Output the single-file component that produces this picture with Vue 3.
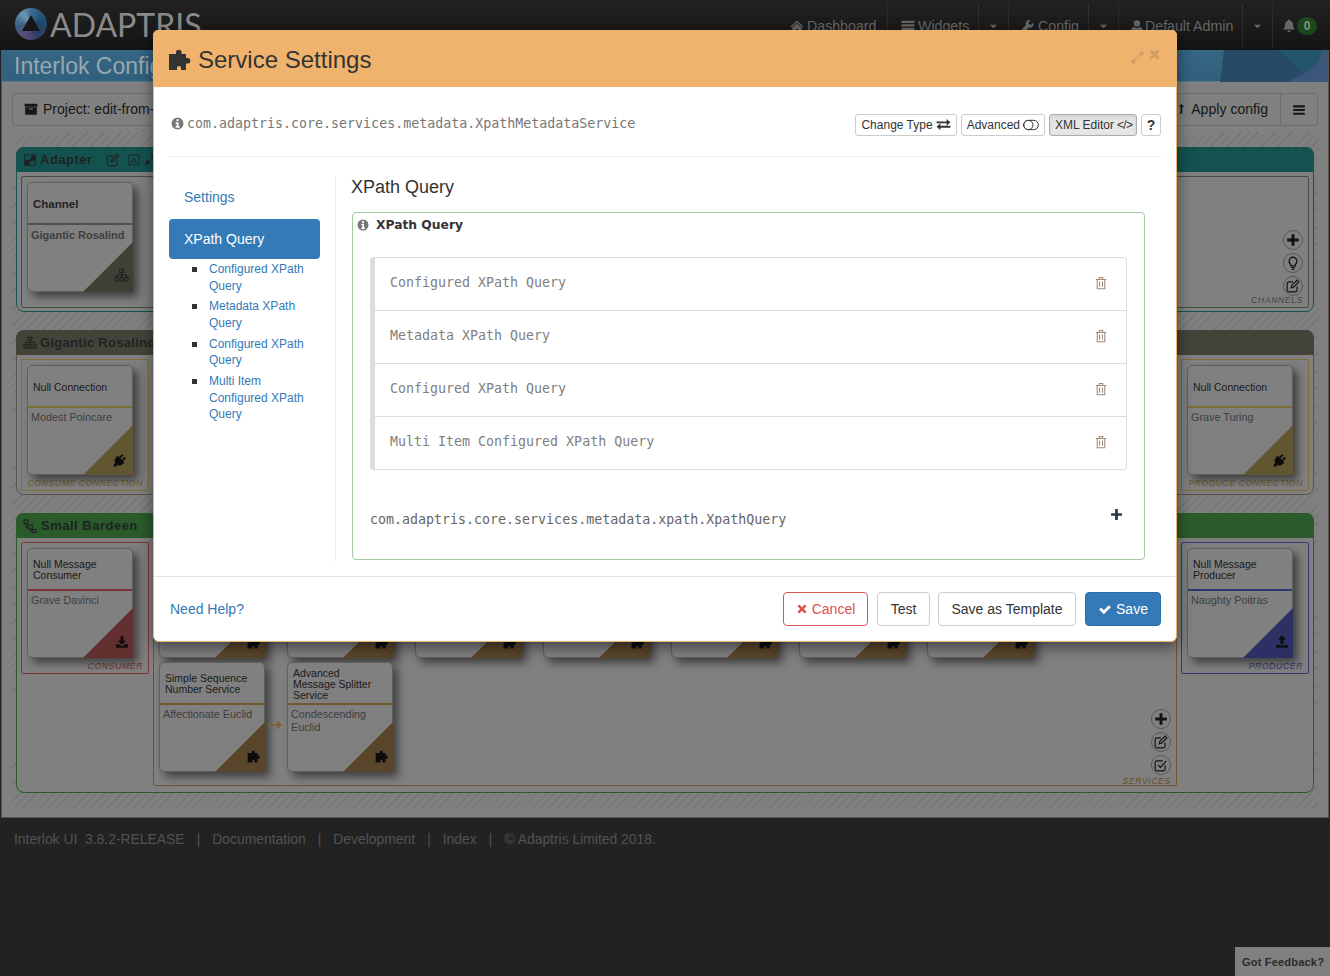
<script setup>
const icons = {
  puzzle: 'M1 7h7V5.500a2.800 2.800 0 0 1 5.600 0V7H18v4h1.500a2.800 2.800 0 0 1 0 5.600H18V23h-5v-2a2 2 0 0 0-4 0v2H1z',
  plug: 'M6.500 8l9.500 9.500-2.500 2.500c-2 2-5 2.200-7 1L3 24 .500 21.500 3 18c-1.200-2-1-5 1-7zM8.500 10L13 5.500l2 2-4.500 4.500zM12 14l4.500-4.500 2 2L14 16z',
  download: 'M9.500 2h5v8h4.500l-7 7-7-7h4.500zM2 16h5l3 3h4l3-3h5v6H2z',
  upload: 'M9.500 16V8H5l7-7 7 7h-4.500v8zM2 17h6v1h8v-1h6v5H2z',
  plus: 'M9.500 2h5v7.500H22v5h-7.500V22h-5v-7.500H2v-5h7.500z',
  check: 'M2 13l3.500-3.500 4.500 4.500L18.500 5.500 22 9 10 21z',
  times: 'M6.500 3L12 8.500 17.500 3 21 6.500 15.500 12 21 17.500 17.500 21 12 15.500 6.500 21 3 17.500 8.500 12 3 6.500z',
  info: 'M12 1a11 11 0 1 0 0 22 11 11 0 0 0 0-22zM10 4h4v3.500h-4zM8.500 9.500H14V17h2v3H8.500v-3h2v-4.500h-2z',
  exchange: 'M1 7h16V3l6 5.500-6 5.500v-4H1zM23 14v3H7v4l-6-5.500L7 10v4z',
  archive: 'M1 3h22v5H1zM2 9h20v13H2zM9 11v2h6v-2z',
  bars: 'M2 4h20v3.500H2zM2 10.250h20v3.500H2zM2 16.500h20V20H2z',
  levelUp: 'M9 22v-2h3V7H8l6-6 6 6h-4v15z',
  home: 'M12 3l11 10-1.500 1.500L12 6 2.500 14.500 1 13zM4 15l8-7 8 7v7h-6v-5h-4v5H4z',
  list: 'M1 3h22v4H1zM1 9h22v4H1zM1 15h22v4H1z',
  wrench: 'M21.500 6.500L17.500 10 14 9l-1-3.500L16.500 2C12 0.500 8 3.500 8 8c0 .8.200 1.500.400 2.200L2 17c-1.500 1.500-1 3.500 0 4.500s3 1.500 4.500 0l6.800-6.400c3.700 1.100 9.700-2.600 8.200-8.600z',
  user: 'M12 2a5.500 5.500 0 1 1 0 11 5.500 5.500 0 0 1 0-11zM4 22c-1.500 0-2-1-2-2.500C2 16 4 13.500 7 13.500c1.200 1.200 3 2 5 2s3.800-.8 5-2c3 0 5 2.500 5 6 0 1.500-.5 2.500-2 2.500z',
  bell: 'M12 1a2 2 0 0 1 2 2c3.500.8 5 3.500 5 7 0 5 2 6 3 8H2c1-2 3-3 3-8 0-3.500 1.500-6.200 5-7a2 2 0 0 1 2-2zM9 19.500h6a3 3 0 0 1-6 0z',
  caret: 'M4 8h16l-8 8z',
  chip: 'M2 2h20v20H2zM4 4v8l8-1 3-7zM20 20v-7l-7 1-2 6z'
}
const lines = {
  sitemap: 'M9 2h6v5H9zM12 7v4M4 11h16v4M4 11v4M12 11v4M1.500 15h5v6h-5zM9.500 15h5v6h-5zM17.500 15h5v6h-5z',
  flow: 'M2 2h7v6H2zM9 11h7v6H9zM16 18h6v5h-6zM5.500 8v6.500H9M12.500 17v3.500H16',
  edit: 'M19 13v6a3 3 0 0 1-3 3H5a3 3 0 0 1-3-3V8a3 3 0 0 1 3-3h7M9 15l1-4L19 2l3 3-9 9z',
  square: 'M3 2h18a1 1 0 0 1 1 1v18a1 1 0 0 1-1 1H3a1 1 0 0 1-1-1V3a1 1 0 0 1 1-1zM7 16l5-7 5 7z',
  compress: 'M22 2l-7 7M15 4v5h5M2 22l7-7M4 15h5v5',
  expand: 'M13 11l8-8M15 2.500h6.500V9M11 13l-8 8M2.500 15v6.500H9',
  bulb: 'M12 2a7 7 0 0 1 4 12.500V17H8v-2.500A7 7 0 0 1 12 2zM9 20h6M10 23h4',
  trash: 'M3 6h18M9 6V2.500h6V6M5.500 6v16h13V6M9.500 9.500v9M14.500 9.500v9',
  toggle: 'M8 5h8a7 7 0 0 1 0 14H8A7 7 0 0 1 8 5zM8 5a7 7 0 0 1 0 14 7 7 0 0 1 0-14z',
  checkSq: 'M19 13v6a3 3 0 0 1-3 3H5a3 3 0 0 1-3-3V8a3 3 0 0 1 3-3h10M7 12l4 4L21 5',
  arrow: 'M0 5h13M9.500 1.500L13 5l-3.500 3.500'
}
const navItems = [
  { icon: 'home', text: 'Dashboard', caret: false, cls: 'n-dash' },
  { icon: 'list', text: 'Widgets', caret: true, cls: 'n-widgets' },
  { icon: 'wrench', text: 'Config', caret: true, cls: 'n-config' },
  { icon: 'user', text: 'Default Admin', caret: true, cls: 'n-user' }
]
const rowOne = [1, 2, 3, 4, 5, 6, 7]
const rowTwo = [
  { title: 'Simple Sequence Number Service', name: 'Affectionate Euclid' },
  { title: 'Advanced Message Splitter Service', name: 'Condescending Euclid' }
]
const subLinks = ['Configured XPath Query', 'Metadata XPath Query', 'Configured XPath Query', 'Multi Item Configured XPath Query']
const queries = ['Configured XPath Query', 'Metadata XPath Query', 'Configured XPath Query', 'Multi Item Configured XPath Query']
const footerLinks = ['Interlok UI  3.8.2-RELEASE', 'Documentation', 'Development', 'Index', '© Adaptris Limited 2018.']
</script>

<template>
  <div class="page">
    <header class="navbar">
      <div class="logo">
        <div class="logo-mark"><svg viewBox="0 0 32 32"><path d="M16 7l9 16H7z" /></svg></div>
        <span class="wordmark">ADAPTRIS</span>
      </div>
      <nav class="nav">
        <template v-for="item in navItems" :key="item.text">
          <div class="nav-item" :class="item.cls">
            <svg class="ic" viewBox="0 0 24 24"><path :d="icons[item.icon]" /></svg>
            <span>{{ item.text }}</span>
          </div>
          <div v-if="item.caret" class="nav-caret">
            <svg class="ic" viewBox="0 0 24 24"><path :d="icons.caret" /></svg>
          </div>
        </template>
        <div class="nav-bell">
          <svg class="ic" viewBox="0 0 24 24"><path :d="icons.bell" /></svg>
          <span class="badge">0</span>
        </div>
      </nav>
    </header>

    <main class="main">
      <div class="banner">
        <span class="banner-title">Interlok Config</span>
        <svg class="banner-art" viewBox="0 0 152 32" preserveAspectRatio="none">
          <path d="M48 0h104v32H44z" fill="#284a66" />
          <path d="M102 0h44c-2 12-10 20-18 24z" fill="#22566a" />
          <path d="M146 0h6v32h-40l16-8c8-4 16-12 18-24z" fill="#3c567a" />
        </svg>
      </div>

      <div class="toolbar">
        <div class="project">
          <svg class="ic" viewBox="0 0 24 24"><path :d="icons.archive" /></svg>
          <span>Project: edit-from-</span>
        </div>
        <div class="apply">
          <svg class="ic" viewBox="0 0 24 24"><path :d="icons.levelUp" /></svg>
          <span>Apply config</span>
        </div>
        <div class="menu">
          <svg class="ic" viewBox="0 0 24 24"><path :d="icons.bars" /></svg>
        </div>
      </div>

      <div class="workspace">
        <section class="panel teal">
          <div class="panel-head">
            <svg class="ic" viewBox="0 0 24 24"><path :d="icons.chip" /></svg>
            <span>Adapter</span>
            <svg class="ln tool" viewBox="0 0 24 24"><path :d="lines.edit" /></svg>
            <svg class="ln tool-s" viewBox="0 0 24 24"><path :d="lines.square" /></svg>
            <svg class="ln tool-c" viewBox="0 0 24 24"><path :d="lines.compress" /></svg>
          </div>
          <div class="panel-body">
            <div class="box grow c-channel">
              <div class="card c-channel">
                <div class="card-title bold">Channel</div>
                <div class="card-name bold">Gigantic Rosalind</div>
                <div class="corner"></div>
                <svg class="corner-ic ln" viewBox="0 0 24 24"><path :d="lines.sitemap" /></svg>
              </div>
              <div class="box-label">CHANNELS</div>
              <div class="actions">
                <span class="act"><svg class="ic" viewBox="0 0 24 24"><path :d="icons.plus" /></svg></span>
                <span class="act"><svg class="ln" viewBox="0 0 24 24"><path :d="lines.bulb" /></svg></span>
                <span class="act"><svg class="ln" viewBox="0 0 24 24"><path :d="lines.edit" /></svg></span>
              </div>
            </div>
          </div>
        </section>

        <section class="panel olive">
          <div class="panel-head">
            <svg class="ln" viewBox="0 0 24 24"><path :d="lines.sitemap" /></svg>
            <span>Gigantic Rosalind</span>
          </div>
          <div class="panel-body between">
            <div class="box c-conn">
              <div class="card c-conn">
                <div class="card-title">Null Connection</div>
                <div class="card-name">Modest Poincare</div>
                <div class="corner"></div>
                <svg class="corner-ic ic big" viewBox="0 0 24 24"><path :d="icons.plug" /></svg>
              </div>
              <div class="box-label">CONSUME CONNECTION</div>
            </div>
            <div class="box c-conn">
              <div class="card c-conn">
                <div class="card-title">Null Connection</div>
                <div class="card-name">Grave Turing</div>
                <div class="corner"></div>
                <svg class="corner-ic ic big" viewBox="0 0 24 24"><path :d="icons.plug" /></svg>
              </div>
              <div class="box-label">PRODUCE CONNECTION</div>
            </div>
          </div>
        </section>

        <section class="panel green">
          <div class="panel-head">
            <svg class="ln" viewBox="0 0 24 24"><path :d="lines.flow" /></svg>
            <span>Small Bardeen</span>
          </div>
          <div class="panel-body between">
            <div class="box c-consumer">
              <div class="card c-consumer">
                <div class="card-title">Null Message Consumer</div>
                <div class="card-name">Grave Davinci</div>
                <div class="corner"></div>
                <svg class="corner-ic ic" viewBox="0 0 24 24"><path :d="icons.download" /></svg>
              </div>
              <div class="box-label">CONSUMER</div>
            </div>
            <div class="box services c-service">
              <div class="service-row">
                <div v-for="n in rowOne" :key="n" class="card c-service">
                  <div class="card-title"></div>
                  <div class="corner"></div>
                  <svg class="corner-ic ic" viewBox="0 0 24 24"><path :d="icons.puzzle" /></svg>
                </div>
              </div>
              <div class="service-row">
                <div v-for="c in rowTwo" :key="c.title" class="card c-service">
                  <div class="card-title">{{ c.title }}</div>
                  <div class="card-name">{{ c.name }}</div>
                  <div class="corner"></div>
                  <svg class="corner-ic ic" viewBox="0 0 24 24"><path :d="icons.puzzle" /></svg>
                </div>
                <svg class="arrow" viewBox="0 0 14 10"><path :d="lines.arrow" /></svg>
              </div>
              <div class="box-label">SERVICES</div>
              <div class="actions">
                <span class="act"><svg class="ic" viewBox="0 0 24 24"><path :d="icons.plus" /></svg></span>
                <span class="act"><svg class="ln" viewBox="0 0 24 24"><path :d="lines.edit" /></svg></span>
                <span class="act"><svg class="ln" viewBox="0 0 24 24"><path :d="lines.checkSq" /></svg></span>
              </div>
            </div>
            <div class="box c-producer">
              <div class="card c-producer">
                <div class="card-title">Null Message Producer</div>
                <div class="card-name">Naughty Poitras</div>
                <div class="corner"></div>
                <svg class="corner-ic ic" viewBox="0 0 24 24"><path :d="icons.upload" /></svg>
              </div>
              <div class="box-label">PRODUCER</div>
            </div>
          </div>
        </section>
      </div>
    </main>

    <footer class="page-foot">
      <template v-for="(link, i) in footerLinks" :key="link">
        <span v-if="i" class="pipe">|</span>
        <span class="foot-link">{{ link }}</span>
      </template>
    </footer>

    <div class="feedback">Got Feedback?</div>

    <div class="modal">
      <div class="modal-head">
        <svg class="ic head-ic" viewBox="0 0 24 24"><path :d="icons.puzzle" /></svg>
        <h4>Service Settings</h4>
        <svg class="ln head-expand" viewBox="0 0 24 24"><path :d="lines.expand" /></svg>
        <svg class="ic head-close" viewBox="0 0 24 24"><path :d="icons.times" /></svg>
      </div>
      <div class="modal-body">
        <div class="info-row">
          <svg class="ic info-ic" viewBox="0 0 24 24"><path :d="icons.info" /></svg>
          <span class="mono class-name">com.adaptris.core.services.metadata.XpathMetadataService</span>
          <div class="xs-btns">
            <button class="xs">Change Type <svg class="ic" viewBox="0 0 24 24"><path :d="icons.exchange" /></svg></button>
            <button class="xs">Advanced <svg class="ln" viewBox="0 0 24 24"><path :d="lines.toggle" /></svg></button>
            <button class="xs on"><span>XML Editor</span> <span class="code">&lt;/&gt;</span></button>
            <button class="xs q">?</button>
          </div>
        </div>
        <div class="columns">
          <aside class="side">
            <a class="pill">Settings</a>
            <a class="pill active">XPath Query</a>
            <ul class="sub">
              <li v-for="(s, i) in subLinks" :key="i"><a>{{ s }}</a></li>
            </ul>
          </aside>
          <div class="content">
            <h3>XPath Query</h3>
            <div class="fieldset">
              <div class="legend">
                <svg class="ic" viewBox="0 0 24 24"><path :d="icons.info" /></svg>
                <span>XPath Query</span>
              </div>
              <div class="query-list">
                <div v-for="(q, i) in queries" :key="i" class="query">
                  <span class="mono">{{ q }}</span>
                  <svg class="ln" viewBox="0 0 24 24"><path :d="lines.trash" /></svg>
                </div>
              </div>
              <div class="add-row">
                <span class="mono">com.adaptris.core.services.metadata.xpath.XpathQuery</span>
                <svg class="ic" viewBox="0 0 24 24"><path :d="icons.plus" /></svg>
              </div>
            </div>
          </div>
        </div>
      </div>
      <div class="modal-foot">
        <a class="help">Need Help?</a>
        <button class="btn cancel"><svg class="ic" viewBox="0 0 24 24"><path :d="icons.times" /></svg> Cancel</button>
        <button class="btn test">Test</button>
        <button class="btn tmpl">Save as Template</button>
        <button class="btn save"><svg class="ic" viewBox="0 0 24 24"><path :d="icons.check" /></svg> Save</button>
      </div>
    </div>
  </div>
</template>

<style>
html, body { margin: 0; background: #222; }
</style>

<style scoped>
* { box-sizing: border-box; }
.page {
  position: relative;
  width: 1330px;
  height: 976px;
  overflow: hidden;
  background: #222;
  font-family: "Liberation Sans", Arial, sans-serif;
  font-size: 14px;
  color: #222;
}
svg { display: block; flex: none; }
.ic { width: 14px; height: 14px; fill: currentColor; }
.ln { width: 14px; height: 14px; fill: none; stroke: currentColor; stroke-width: 2; }
.mono { font-family: "DejaVu Sans Mono", monospace; font-size: 13.3px; }

/* navbar */
.navbar {
  height: 50px;
  display: flex;
  justify-content: space-between;
  background: linear-gradient(#222, #141414);
  color: #666;
}
.logo { display: flex; align-items: flex-start; padding: 8px 0 0 15px; }
.logo-mark {
  width: 32px;
  height: 32px;
  border-radius: 50%;
  background: conic-gradient(#3a6b90, #1f4868 22%, #2a3e66 40%, #5c4a78 58%, #3a5c80 72%, #6b97b5 90%, #3a6b90);
}
.logo-mark svg { width: 32px; height: 32px; fill: #161616; }
.wordmark {
  margin: -5px 0 0 3px;
  font-family: Lato, sans-serif;
  font-size: 32px;
  line-height: 44px;
  color: #8a8a8a;
}
.nav { display: flex; height: 48px; margin-top: 4px; font-size: 14.2px; }
.nav-item, .nav-caret, .nav-bell { display: flex; align-items: center; gap: 3px; height: 44px; }
.nav-item { padding-left: 11px; }
.n-dash { width: 109px; border-right: 1px solid #2b2b2b; }
.n-widgets { width: 91px; padding-left: 13px; border-right: 1px dotted #3d3d3d; }
.n-config { width: 80px; padding-left: 12px; border-right: 1px dotted #3d3d3d; }
.n-user { width: 124px; gap: 1px; border-right: 1px dotted #3d3d3d; }
.nav-caret { width: 30px; justify-content: center; border-right: 1px solid #2b2b2b; }
.nav-caret .ic { width: 11px; height: 11px; }
.nav-bell { width: 57px; padding-left: 9px; gap: 0; }
.badge {
  width: 20px;
  height: 18px;
  margin-left: 1px;
  border-radius: 9px;
  background: #1c471c;
  color: #84957f;
  font-size: 12px;
  font-weight: bold;
  line-height: 18px;
  text-align: center;
}

/* page */
.main {
  height: 768px;
  margin: 0 0 0 1px;
  width: 1328px;
  border: 1px solid #555;
  border-top: 0;
  background: #808080;
}
.banner {
  position: relative;
  height: 32px;
  background: linear-gradient(#356682, #31607e);
  box-shadow: inset 0 -1px 0 #587a90;
  overflow: hidden;
}
.banner-title {
  display: block;
  padding-left: 12px;
  color: #97a8b1;
  font-size: 23px;
  line-height: 32px;
}
.banner-art { position: absolute; right: 0; top: 0; width: 152px; height: 32px; }
.toolbar {
  display: flex;
  align-items: center;
  height: 33px;
  margin: 11px 10px 0;
  padding-bottom: 2px;
  border: 1px solid #6d6d6d;
  border-radius: 4px;
  color: #161616;
}
.project { display: flex; align-items: center; gap: 5px; padding-left: 11px; flex: 1; }
.apply { display: flex; align-items: center; gap: 5px; padding-right: 12px; font-size: 14.1px; }
.apply .ic { width: 11px; }
.menu { display: flex; align-items: center; justify-content: center; width: 37px; height: 31px; margin-bottom: -2px; border-left: 1px solid #6d6d6d; }
.workspace {
  height: 676px;
  margin: 6px 10px 0;
  padding: 15px 4px 0;
  display: flex;
  flex-direction: column;
  gap: 18px;
  background: repeating-linear-gradient(135deg, #808080 0 5px, #747474 5px 6px);
}

.panel { border: 1px solid; border-radius: 8px; background: #808080; }
.panel.teal { height: 165px; border-color: #145452; }
.panel.olive { height: 165px; border-color: #555550; }
.panel.green { height: 280px; border-color: #2b5a2b; }
.panel-head {
  display: flex;
  align-items: center;
  gap: 3px;
  height: 25px;
  margin: -1px -1px 0;
  padding: 0 7px;
  border-radius: 8px 8px 0 0;
  font-size: 13px;
  font-weight: bold;
  letter-spacing: .5px;
  color: #1e2422;
}
.teal .panel-head { background: #145250; }
.olive .panel-head { background: #44433a; letter-spacing: .3px; }
.green .panel-head { background: #2b5b2b; gap: 4px; }
.panel-head .tool { margin-left: 10px; }
.panel-head .tool-s { width: 12px; height: 12px; margin-left: 5px; }
.panel-head .tool-c { width: 13px; height: 13px; margin-left: 1px; stroke-width: 3; }
.panel-body { display: flex; padding: 4px 4px 0; }
.panel-body.between { justify-content: space-between; gap: 4px; }

.box {
  position: relative;
  display: flex;
  flex-direction: column;
  flex: none;
  width: 128px;
  height: 132px;
  padding: 5px;
  border: 1px solid;
  border-radius: 2px;
}
.box.grow { flex: 1; }
.box.services { width: 1024px; height: 244px; gap: 4px; }
.box-label {
  margin-top: auto;
  margin-bottom: -5px;
  text-align: right;
  font-size: 8.5px;
  line-height: 14px;
  font-style: italic;
  letter-spacing: .7px;
  white-space: nowrap;
}
.services .box-label { margin-top: -2px; }
.card {
  position: relative;
  flex: none;
  width: 106px;
  height: 110px;
  background: #808080;
  border: 1px solid #606060;
  border-radius: 5px 5px 0 5px;
  box-shadow: 5px 5px 8px rgba(0, 0, 0, .5);
}
.card-title {
  display: flex;
  align-items: center;
  height: 42px;
  padding: 2px 12px 0 5px;
  border-bottom: 2px solid;
  font-size: 10.5px;
  line-height: 11px;
  color: #1a1a1a;
}
.card-title.bold { font-size: 11.5px; font-weight: bold; color: #222; padding-top: 3px; }
.card-name { padding: 3px 2px 0 3px; font-size: 10.8px; line-height: 13px; color: #3e3e3e; }
.card-name.bold { font-weight: bold; font-size: 11px; padding-top: 4px; }
.corner {
  position: absolute;
  right: -1px;
  bottom: -1px;
  width: 50px;
  height: 50px;
  clip-path: polygon(100% 0, 100% 100%, 0 100%);
}
.corner-ic { position: absolute; right: 3px; bottom: 8px; color: #0d0d0d; }
.corner-ic.ln { width: 15px; height: 15px; stroke-width: 1.500; color: #1c1c1c; }
.corner-ic.big { width: 17px; height: 17px; right: 2px; bottom: 7px; }

.c-channel { border-color: #4a4a42; }
.c-channel .card-title { border-bottom-color: #4f4f4f; }
.c-channel .corner { background: #3f3f35; }
.c-channel .box-label { color: #444; }
.c-conn { border-color: #7d6e38; }
.c-conn .card-title { border-bottom-color: #7d6e38; }
.c-conn .corner { background: #625630; }
.c-conn .box-label { color: #6a5e2e; }
.c-consumer { border-color: #7c3434; }
.c-consumer .card-title { border-bottom-color: #7c3434; }
.c-consumer .corner { background: #632e2e; }
.c-consumer .box-label { color: #743434; }
.c-producer { border-color: #33376f; }
.c-producer .card-title { border-bottom-color: #2f3472; }
.c-producer .corner { background: #2c3064; }
.c-producer .box-label { color: #363a6c; }
.c-service { border-color: #74502c; }
.c-service .card-title { border-bottom-color: #74582f; }
.c-service .corner { background: #5a472b; }
.c-service .box-label { color: #684c26; }
.card.c-channel, .card.c-conn, .card.c-consumer, .card.c-producer, .card.c-service { border-color: #606060; }

.service-row { position: relative; display: flex; gap: 22px; }
.arrow { position: absolute; left: 108px; top: 58px; width: 15px; height: 10px; fill: none; stroke: #7a6138; stroke-width: 2; }
.actions {
  position: absolute;
  right: 5px;
  bottom: 10px;
  display: flex;
  flex-direction: column;
  gap: 3px;
}
.grow .actions { bottom: 11px; }
.act {
  display: flex;
  align-items: center;
  justify-content: center;
  width: 20px;
  height: 20px;
  border: 1px solid #565656;
  border-radius: 50%;
  color: #121212;
}
.act svg { width: 14px; height: 14px; }

.page-foot {
  display: flex;
  align-items: center;
  gap: 12px;
  height: 42px;
  padding-left: 14px;
  font-size: 13.9px;
  color: #525252;
  white-space: pre;
}
.feedback {
  position: absolute;
  right: 0;
  bottom: 0;
  width: 95px;
  height: 29px;
  padding-left: 7px;
  background: #808080;
  color: #2a2a2a;
  font-size: 11px;
  font-weight: bold;
  line-height: 30px;
  letter-spacing: .2px;
}

/* modal */
.modal {
  position: absolute;
  left: 153px;
  top: 30px;
  width: 1024px;
  height: 612px;
  display: flex;
  flex-direction: column;
  background: #fff;
  border: 1px solid #f0b36e;
  border-radius: 6px;
  box-shadow: 0 5px 15px rgba(0, 0, 0, .5);
}
.modal-head {
  position: relative;
  display: flex;
  align-items: center;
  gap: 6px;
  height: 57px;
  padding: 0 15px;
  margin: -1px -1px 0;
  border-radius: 5px 5px 0 0;
  background: #f0b36e;
  color: #333;
}
.modal-head h4 { margin: 2px 0 0; font-size: 24px; font-weight: normal; line-height: 60px; }
.head-ic { width: 24px; height: 24px; }
.head-expand { position: absolute; right: 33px; top: 21px; width: 13px; height: 13px; stroke-width: 2.500; color: #cc9c68; }
.head-close { position: absolute; right: 16px; top: 18px; width: 13px; height: 13px; color: #cf9d63; }
.modal-body { flex: 1; padding: 0 15px; }
.info-row {
  display: flex;
  align-items: center;
  height: 70px;
  padding: 5px 0 0;
  border-bottom: 1px solid #eee;
  color: #777;
}
.info-ic { margin: -2px 3px 0 2px; width: 13px; height: 13px; }
.class-name { margin-top: -2px; }
.xs-btns { display: flex; gap: 4px; margin-left: auto; margin-top: 1px; }
.xs {
  display: flex;
  align-items: center;
  gap: 3px;
  height: 22px;
  padding: 0 5px;
  background: #fff;
  border: 1px solid #ccc;
  border-radius: 3px;
  font-family: inherit;
  font-size: 12px;
  white-space: nowrap;
  color: #333;
}
.xs svg { width: 15px; height: 15px; }
.xs .ln { stroke-width: 1.500; width: 16px; height: 16px; }
.xs.on { width: 88px; background: #e6e6e6; border-color: #adadad; box-shadow: inset 0 2px 4px rgba(0, 0, 0, .1); }
.code { letter-spacing: -.6px; }
.xs.q { width: 20px; justify-content: center; padding: 0; font-weight: bold; font-size: 14px; }
.columns { display: flex; margin-top: 20px; }
.side { width: 167px; height: 384px; border-right: 1px solid #eee; flex: none; }
.side .pill {
  display: block;
  width: 151px;
  height: 40px;
  margin-bottom: 2px;
  padding-left: 15px;
  line-height: 40px;
  border-radius: 4px;
  color: #337ab7;
}
.side .pill.active { background: #337ab7; color: #fff; }
.sub { margin: 0; padding: 0 0 0 40px; list-style: none; font-size: 12px; line-height: 16.500px; color: #333; }
.sub li { position: relative; margin-bottom: 4.400px; width: 102px; }
.sub li::before {
  content: "";
  position: absolute;
  left: -17px;
  top: 6px;
  width: 5px;
  height: 5px;
  background: #333;
}
.sub a { color: #337ab7; }
.content { flex: 1; padding-left: 15px; padding-right: 16px; }
.content h3 { margin: 0 0 15px; font-size: 18px; font-weight: normal; line-height: 20px; color: #333; }
.fieldset {
  height: 348px;
  margin-left: 1px;
  padding: 0 17px;
  border: 1px solid #a3c9a3;
  border-radius: 4px;
}
.legend {
  display: flex;
  align-items: center;
  gap: 7px;
  height: 24px;
  margin: 0 0 20px -13px;
  font-family: "DejaVu Sans", sans-serif;
  font-size: 12.3px;
  font-weight: bold;
  color: #333;
}
.legend .ic { width: 12px; height: 12px; color: #777; }
.query-list { border: 1px solid #ddd; border-left: 5px solid #ddd; border-radius: 4px; }
.query {
  display: flex;
  align-items: center;
  justify-content: space-between;
  height: 53px;
  padding: 0 18px 0 15px;
  border-bottom: 1px solid #ddd;
  color: #808080;
}
.query .mono { margin-bottom: 4px; }
.query:last-child { border-bottom: 0; height: 52px; }
.query svg { width: 14px; height: 14px; margin-bottom: 2px; color: #a08a78; stroke-width: 1.800; }
.add-row {
  display: flex;
  align-items: flex-start;
  justify-content: space-between;
  margin-top: 38px;
  padding-right: 4px;
  color: #666;
}
.add-row .mono { padding-top: 4px; }
.add-row .ic { width: 13px; height: 13px; color: #2b3642; }
.modal-foot {
  display: flex;
  align-items: center;
  gap: 9px;
  height: 65px;
  padding: 0 15px 1px 16px;
  border-top: 1px solid #e5e5e5;
}
.help { margin-right: auto; color: #337ab7; }
.btn {
  display: flex;
  align-items: center;
  justify-content: center;
  gap: 4px;
  height: 34px;
  padding: 0;
  background: #fff;
  border: 1px solid #ccc;
  border-radius: 4px;
  font-family: inherit;
  font-size: 14px;
  color: #333;
}
.btn .ic { width: 12px; height: 12px; }
.btn.cancel { width: 85px; color: #d9534f; border-color: #d9534f; }
.btn.test { width: 53px; margin-right: -1px; }
.btn.tmpl { width: 138px; }
.btn.save { width: 76px; background: #337ab7; border-color: #2e6da4; color: #fff; }
.btn.save .ic { width: 14px; height: 14px; }
</style>
